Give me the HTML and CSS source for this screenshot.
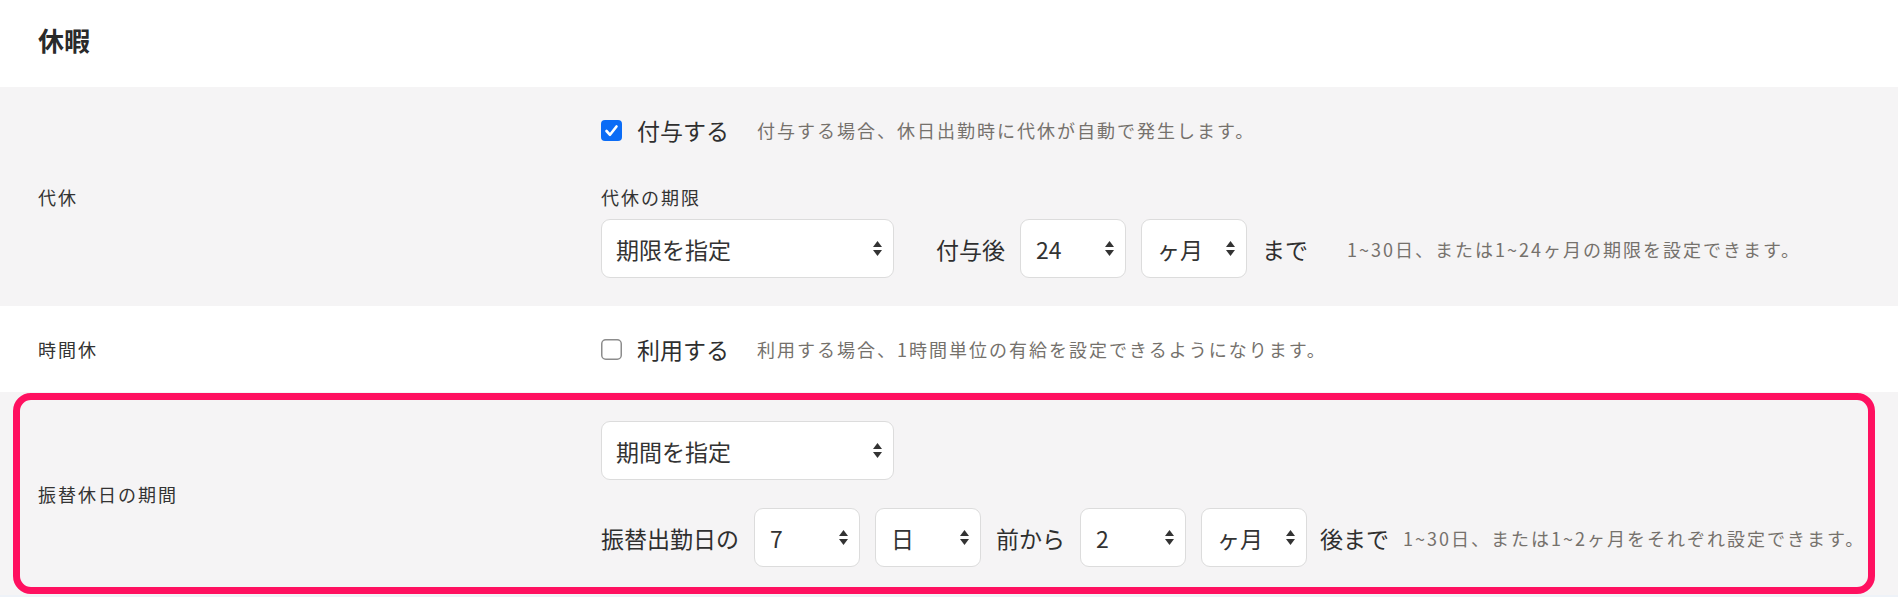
FILE: index.html
```html
<!DOCTYPE html>
<html lang="ja">
<head>
<meta charset="utf-8">
<title>休暇</title>
<link rel="stylesheet" href="styles.css">
</head>
<body>
<div class="page">
  <header class="header"><h2 class="title">休暇</h2></header>

  <section class="row row-gray row-daikyu">
    <div class="row-label">代休</div>
    <div class="row-body">
      <div class="check-line">
        <span class="checkbox checked">
          <svg width="21" height="21" viewBox="0 0 21 21"><rect x="0" y="0" width="21" height="21" rx="4" fill="#0b6cf6"/><polyline points="5.5,11 9,14.8 15.5,6.5" fill="none" stroke="#fff" stroke-width="2.6" stroke-linecap="round" stroke-linejoin="round"/></svg>
        </span>
        <span class="check-label">付与する</span>
        <span class="hint hint-check">付与する場合、休日出勤時に代休が自動で発生します。</span>
      </div>
      <div class="sub-label">代休の期限</div>
      <div class="field-line">
        <div class="select select-wide"><span>期限を指定</span><svg class="arrows" width="9" height="15" viewBox="0 0 9 15"><polygon points="0,6 4.5,0 9,6" fill="#333"/><polygon points="0,9 4.5,15 9,9" fill="#333"/></svg></div>
        <span class="text text-after-wide">付与後</span>
        <div class="select"><span>24</span><svg class="arrows" width="9" height="15" viewBox="0 0 9 15"><polygon points="0,6 4.5,0 9,6" fill="#333"/><polygon points="0,9 4.5,15 9,9" fill="#333"/></svg></div>
        <div class="select"><span>ヶ月</span><svg class="arrows" width="9" height="15" viewBox="0 0 9 15"><polygon points="0,6 4.5,0 9,6" fill="#333"/><polygon points="0,9 4.5,15 9,9" fill="#333"/></svg></div>
        <span class="text">まで</span>
        <span class="hint hint-far">1~30日、または1~24ヶ月の期限を設定できます。</span>
      </div>
    </div>
  </section>

  <section class="row row-white row-jikan">
    <div class="row-label">時間休</div>
    <div class="row-body">
      <div class="check-line">
        <span class="checkbox">
          <svg width="21" height="21" viewBox="0 0 21 21"><rect x="0.75" y="0.75" width="19.5" height="19.5" rx="4" fill="#fff" stroke="#8c8c8c" stroke-width="1.5"/></svg>
        </span>
        <span class="check-label">利用する</span>
        <span class="hint hint-check">利用する場合、1時間単位の有給を設定できるようになります。</span>
      </div>
    </div>
  </section>

  <section class="row row-gray row-furikae">
    <div class="row-label">振替休日の期間</div>
    <div class="row-body">
      <div class="field-line">
        <div class="select select-wide"><span>期間を指定</span><svg class="arrows" width="9" height="15" viewBox="0 0 9 15"><polygon points="0,6 4.5,0 9,6" fill="#333"/><polygon points="0,9 4.5,15 9,9" fill="#333"/></svg></div>
      </div>
      <div class="field-line field-line-second">
        <span class="text">振替出勤日の</span>
        <div class="select"><span>7</span><svg class="arrows" width="9" height="15" viewBox="0 0 9 15"><polygon points="0,6 4.5,0 9,6" fill="#333"/><polygon points="0,9 4.5,15 9,9" fill="#333"/></svg></div>
        <div class="select"><span>日</span><svg class="arrows" width="9" height="15" viewBox="0 0 9 15"><polygon points="0,6 4.5,0 9,6" fill="#333"/><polygon points="0,9 4.5,15 9,9" fill="#333"/></svg></div>
        <span class="text">前から</span>
        <div class="select"><span>2</span><svg class="arrows" width="9" height="15" viewBox="0 0 9 15"><polygon points="0,6 4.5,0 9,6" fill="#333"/><polygon points="0,9 4.5,15 9,9" fill="#333"/></svg></div>
        <div class="select"><span>ヶ月</span><svg class="arrows" width="9" height="15" viewBox="0 0 9 15"><polygon points="0,6 4.5,0 9,6" fill="#333"/><polygon points="0,9 4.5,15 9,9" fill="#333"/></svg></div>
        <span class="text text-tight">後まで</span>
        <span class="hint hint-near">1~30日、または1~2ヶ月をそれぞれ設定できます。</span>
      </div>
    </div>
    <div class="highlight"></div>
  </section>
</div>
</body>
</html>
```

FILE: styles.css
```css
* {
  box-sizing: border-box;
}

html, body {
  margin: 0;
  padding: 0;
}

body {
  background: #eef2f8;
  font-family: "Noto Sans CJK JP", "Noto Sans", sans-serif;
  color: #333;
}

.page {
  background: #fff;
}

.header {
  height: 87px;
  padding: 27px 0 0 38px;
}

.title {
  margin: 0;
  font-size: 26px;
  line-height: 26px;
  font-weight: 700;
  color: #2a2a2a;
}

.row {
  display: grid;
  grid-template-columns: 563px 1fr;
  align-items: center;
  padding-left: 38px;
}

.row-gray {
  background: #f5f4f5;
}

.row-white {
  background: #fff;
}

.row-daikyu {
  padding-top: 28px;
  padding-bottom: 28px;
}

.row-jikan {
  padding-top: 28px;
  padding-bottom: 28px;
}

.row-furikae {
  position: relative;
  padding-top: 29px;
  padding-bottom: 28px;
}

.row-label {
  font-size: 18px;
  line-height: 26px;
  letter-spacing: 2px;
  color: #333;
}

.row-body {
  display: flex;
  flex-direction: column;
}

.check-line {
  display: flex;
  align-items: center;
  height: 30px;
}

.checkbox {
  display: flex;
  width: 21px;
  height: 21px;
  margin-right: 15px;
}

.check-label {
  font-size: 23px;
  line-height: 30px;
  color: #2f2f2f;
}

.hint {
  font-size: 18px;
  line-height: 26px;
  letter-spacing: 2px;
  color: #75716c;
  white-space: nowrap;
}

.hint-check {
  margin-left: 28px;
}

.hint-far {
  margin-left: 24px;
}

.hint-near {
  margin-left: -1px;
}

.sub-label {
  margin-top: 39px;
  font-size: 18px;
  line-height: 26px;
  letter-spacing: 2px;
  color: #333;
}

.field-line {
  display: flex;
  align-items: center;
  gap: 15px;
  margin-top: 9px;
  height: 59px;
}

.row-furikae .field-line {
  margin-top: 0;
}

.row-furikae .field-line-second {
  margin-top: 28px;
}

.select {
  display: flex;
  align-items: center;
  justify-content: space-between;
  width: 106px;
  height: 59px;
  padding: 0 11px 0 15px;
  background: #fff;
  border: 1px solid #dcdcdc;
  border-radius: 9px;
  font-size: 23px;
  line-height: 30px;
  color: #333;
}

.select-wide {
  width: 293px;
  padding-left: 14px;
}

.arrows {
  flex: none;
}

.text {
  font-size: 23px;
  line-height: 30px;
  color: #2f2f2f;
  white-space: nowrap;
}

.text-after-wide {
  margin-left: 27px;
}

.text-tight {
  margin-left: -2px;
}

.highlight {
  position: absolute;
  left: 13px;
  top: 1px;
  right: 23px;
  bottom: 1px;
  border: 7px solid #ff1060;
  border-radius: 18px;
  pointer-events: none;
}
```
